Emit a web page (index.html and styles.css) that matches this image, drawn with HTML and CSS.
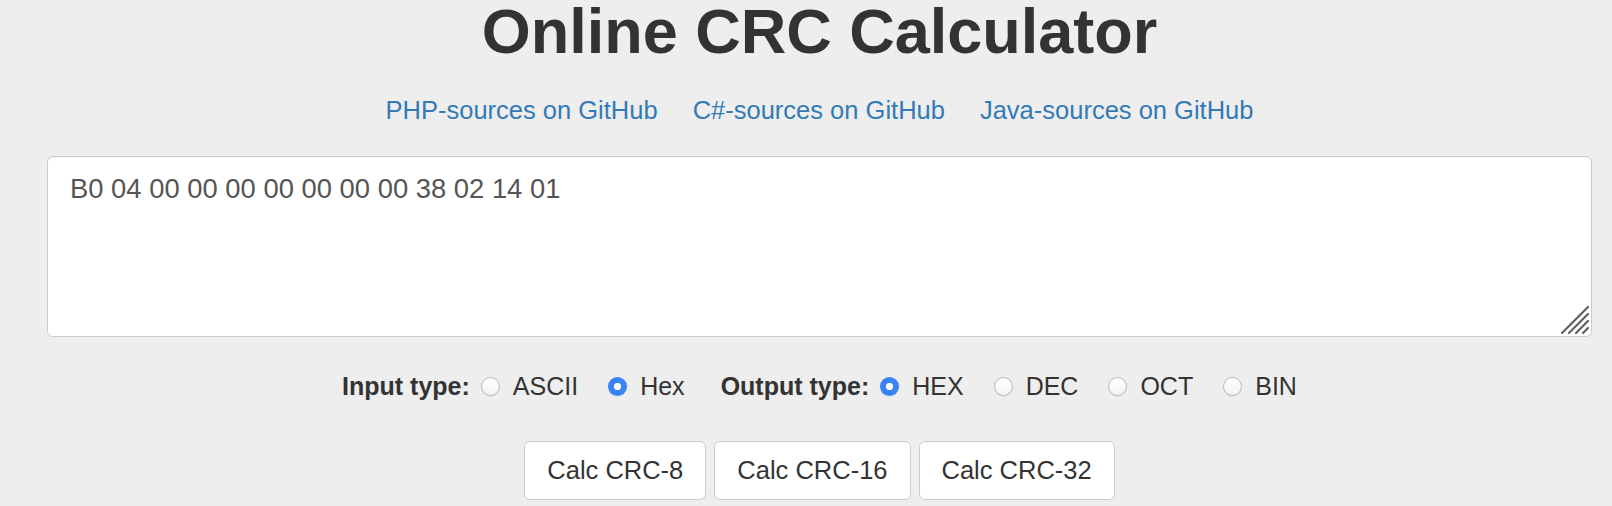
FILE: index.html
```html
<!DOCTYPE html>
<html lang="en">
<head>
<meta charset="utf-8">
<title>Online CRC Calculator</title>
<link rel="stylesheet" href="styles.css">
</head>
<body>
<div class="container">
  <h1 class="title">Online CRC Calculator</h1>
  <div class="links">
    <a href="#">PHP-sources on GitHub</a>
    <a href="#">C#-sources on GitHub</a>
    <a href="#">Java-sources on GitHub</a>
  </div>
  <div class="input-wrap">
    <textarea class="data" spellcheck="false">B0 04 00 00 00 00 00 00 00 38 02 14 01</textarea>
    <svg class="grip" width="30" height="30" viewBox="0 0 30 30" aria-hidden="true">
      <g stroke="#5f5f5f" stroke-width="2.2" stroke-linecap="round">
        <line x1="2" y1="28" x2="28" y2="2"/>
        <line x1="9" y1="28" x2="28" y2="9"/>
        <line x1="16" y1="28" x2="28" y2="16"/>
        <line x1="23" y1="28" x2="28" y2="23"/>
      </g>
    </svg>
  </div>
  <div class="options">
    <span class="opt-label">Input type:</span>
    <label class="opt"><input type="radio" name="in"><span>ASCII</span></label>
    <label class="opt"><input type="radio" name="in" checked><span>Hex</span></label>
    <span class="opt-label out">Output type:</span>
    <label class="opt"><input type="radio" name="out" checked><span>HEX</span></label>
    <label class="opt"><input type="radio" name="out"><span>DEC</span></label>
    <label class="opt"><input type="radio" name="out"><span>OCT</span></label>
    <label class="opt"><input type="radio" name="out"><span>BIN</span></label>
  </div>
  <div class="buttons">
    <button class="btn">Calc CRC-8</button>
    <button class="btn">Calc CRC-16</button>
    <button class="btn">Calc CRC-32</button>
  </div>
</div>
</body>
</html>
```

FILE: styles.css
```css
html, body {
  margin: 0;
  padding: 0;
}
body {
  background: #eeeeee;
  color: #333333;
  font-family: "Liberation Sans", Arial, Helvetica, sans-serif;
  font-size: 25.5px;
  line-height: 1.42857;
}
.container {
  padding: 0 20px 0 47px;
}
.title {
  margin: 0;
  font-size: 63px;
  line-height: 63px;
  font-weight: bold;
  text-align: center;
  color: #333333;
}
.links {
  margin-top: 29px;
  display: flex;
  justify-content: center;
  gap: 35px;
}
.links a {
  color: #337ab7;
  text-decoration: none;
}
.input-wrap {
  position: relative;
  margin-top: 28px;
}
.data {
  display: block;
  box-sizing: border-box;
  width: 100%;
  height: 181px;
  margin: 0;
  padding: 12px 22px;
  border: 1px solid #cccccc;
  border-radius: 6px;
  background: #ffffff;
  color: #555555;
  font-family: "Liberation Sans", Arial, Helvetica, sans-serif;
  font-size: 27.4px;
  line-height: 1.42857;
  resize: none;
  outline: none;
  box-shadow: inset 0 1px 1px rgba(0,0,0,0.04);
}
.grip {
  position: absolute;
  right: 2px;
  bottom: 2px;
}
.options {
  margin-top: 31px;
  display: flex;
  justify-content: center;
  align-items: center;
  font-size: 25px;
  line-height: 36px;
}
.opt-label {
  font-weight: bold;
  margin-right: 11px;
}
.opt-label.out {
  margin-left: 36px;
}
.opt {
  display: flex;
  align-items: center;
}
.opt + .opt {
  margin-left: 30px;
}
.opt input {
  appearance: none;
  -webkit-appearance: none;
  box-sizing: border-box;
  width: 19px;
  height: 19px;
  margin: 0 13px 0 0;
  border: 1px solid #b8b8b8;
  border-radius: 50%;
  background: linear-gradient(#ffffff, #f3f3f3);
  box-shadow: 0 1px 1px rgba(0,0,0,0.06);
}
.opt input:checked {
  border: none;
  background: radial-gradient(circle, #ffffff 0, #ffffff 3.3px, #3a82f7 4px);
}
.buttons {
  margin-top: 37px;
  display: flex;
  justify-content: center;
  gap: 8px;
}
.btn {
  box-sizing: border-box;
  padding: 10px 22px;
  border: 1px solid #cccccc;
  border-radius: 6px;
  background: #ffffff;
  color: #333333;
  font-family: "Liberation Sans", Arial, Helvetica, sans-serif;
  font-size: 25.5px;
  line-height: 1.42857;
}
```
